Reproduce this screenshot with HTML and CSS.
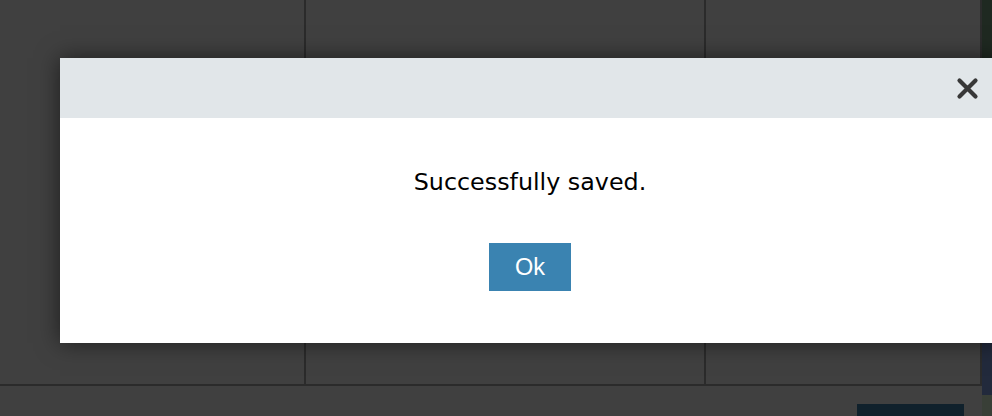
FILE: index.html
```html
<!DOCTYPE html>
<html lang="en">
<head>
  <meta charset="UTF-8" />
  <meta name="viewport" content="width=device-width, initial-scale=1.0"/>
  <title>Saved</title>
  <link rel="stylesheet" href="styles.css">
</head>
<body>

  <div class="screen">
    <div class="board">
      <div class="grid">
        <div class="cell"></div>
        <div class="cell"></div>
        <div class="cell"></div>
      </div>
      <div class="footer">
        <div class="footer-btn"></div>
      </div>
    </div>
    <div class="side">
      <div class="side-top"></div>
      <div class="side-mid"></div>
      <div class="side-bottom"></div>
    </div>
  </div>

  <div class="modal">
    <div class="modal-header">
      <button class="close" type="button" aria-label="Close">
        <svg width="23" height="23" viewBox="0 0 23 23">
          <path d="M3.5 3.5 L19.5 19.5 M19.5 3.5 L3.5 19.5" stroke="#383838" stroke-width="4.2" stroke-linecap="round" fill="none"/>
        </svg>
      </button>
    </div>
    <div class="modal-body">
      <p class="message">Successfully saved.</p>
      <button class="ok" type="button">Ok</button>
    </div>
  </div>

</body>
</html>
```

FILE: styles.css
```css
body {
  margin: 0;
  overflow: hidden;
  background: #404040;
  font-family: 'DejaVu Sans', Verdana, sans-serif;
}

.screen {
  display: flex;
  height: 416px;
}

.board {
  width: 982px;
  display: flex;
  flex-direction: column;
  gap: 2px;
  background: #2b2b2b;
}

.grid {
  display: grid;
  grid-template-columns: 304px 398px 274px;
  column-gap: 2px;
  height: 384px;
}

.cell {
  background: #404040;
}

.footer {
  flex: 1;
  display: flex;
  justify-content: flex-end;
  align-items: flex-start;
  padding: 18px 18px 0 0;
  background: #404040;
}

.footer-btn {
  width: 107px;
  height: 12px;
  background: #10212c;
}

.side {
  width: 10px;
  display: flex;
  flex-direction: column;
}

.side-top {
  height: 343px;
  background: #1f2921;
}

.side-mid {
  height: 52px;
  background: #222a3c;
}

.side-bottom {
  flex: 1;
  background: #393f37;
}

.modal {
  position: absolute;
  top: 58px;
  left: 60px;
  width: 940px;
  background: #fff;
  box-shadow: 0 0 22px rgba(0, 0, 0, 0.55);
}

.modal-header {
  height: 60px;
  display: flex;
  align-items: center;
  justify-content: flex-end;
  padding-right: 21px;
  background: #e1e6e9;
}

.close {
  display: flex;
  padding: 0;
  border: none;
  background: none;
  cursor: pointer;
}

.modal-body {
  display: flex;
  flex-direction: column;
  align-items: center;
  padding: 50px 0 52px;
}

.message {
  margin: 0;
  font-size: 23.8px;
  line-height: 28px;
  color: #000;
}

.ok {
  margin-top: 47px;
  width: 82px;
  height: 48px;
  padding: 0;
  border: none;
  background: #3a83b1;
  color: #fff;
  font-family: 'Liberation Sans', Arial, sans-serif;
  font-size: 23.5px;
  line-height: 48px;
  cursor: pointer;
}
```
